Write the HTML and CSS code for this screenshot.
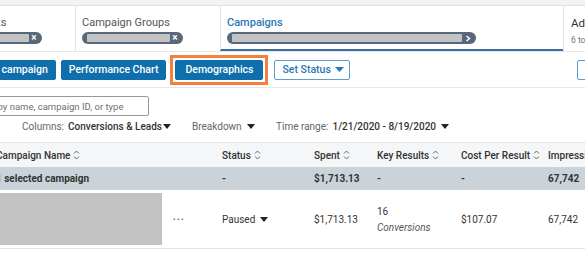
FILE: index.html
```html
<!DOCTYPE html>
<html lang="en">
<head>
    <meta charset="UTF-8">
    <title>Campaigns</title>
    <link rel="stylesheet" href="styles.css">
</head>
<body>
    <div class="top-strip"></div>

    <nav class="tabs">
        <div class="tab tab-accounts">
            <div class="tab-label">Accounts</div>
            <div class="pill"><span class="pill-bar"></span><span class="pill-icon">×</span></div>
        </div>
        <div class="tab tab-groups">
            <div class="tab-label">Campaign Groups</div>
            <div class="pill"><span class="pill-bar"></span><span class="pill-icon">×</span></div>
        </div>
        <div class="tab tab-campaigns active">
            <div class="tab-label">Campaigns</div>
            <div class="pill pill-wide">
                <span class="pill-bar"></span>
                <svg class="pill-chevron" width="6" height="7" viewBox="0 0 6 7"><path d="M1.5 1 L4.5 3.5 L1.5 6" fill="none" stroke="#fff" stroke-width="1.5"/></svg>
            </div>
        </div>
        <div class="tab tab-ads">
            <div class="tab-label">Ads</div>
            <div class="tab-sub">6 total</div>
        </div>
    </nav>

    <div class="actions">
        <button class="btn">Create campaign</button>
        <button class="btn">Performance Chart</button>
        <span class="highlight"><button class="btn btn-demo">Demographics</button></span>
        <button class="btn btn-outline btn-menu">Set Status <svg class="caret" width="9" height="5" viewBox="0 0 9 5"><path d="M0 0 H9 L4.5 5 Z" fill="#2a78b6"/></svg></button>
        <button class="btn btn-outline btn-edge">Export</button>
    </div>

    <div class="search-row">
        <input class="search" type="text" placeholder="Search by name, campaign ID, or type">
    </div>

    <div class="filters">
        <span class="filter f-columns"><span class="filter-label">Columns:</span><b>Conversions &amp; Leads</b><svg class="caret" width="8" height="5" viewBox="0 0 8 5"><path d="M0 0 H8 L4 5 Z" fill="#222"/></svg></span>
        <span class="filter f-breakdown"><span class="filter-label">Breakdown</span><svg class="caret spaced" width="8" height="5" viewBox="0 0 8 5"><path d="M0 0 H8 L4 5 Z" fill="#222"/></svg></span>
        <span class="filter f-time"><span class="filter-label">Time range:</span><b>1/21/2020 - 8/19/2020</b><svg class="caret spaced" width="8" height="5" viewBox="0 0 8 5"><path d="M0 0 H8 L4 5 Z" fill="#222"/></svg></span>
    </div>

    <div class="table">
        <div class="row head">
            <div class="cell">Campaign Name <svg class="sort" width="7" height="10" viewBox="0 0 7 10"><path d="M1 3.5 L3.5 1 L6 3.5 M1 6.5 L3.5 9 L6 6.5" fill="none" stroke="#666" stroke-width="1"/></svg></div>
            <div class="cell">Status <svg class="sort" width="7" height="10" viewBox="0 0 7 10"><path d="M1 3.5 L3.5 1 L6 3.5 M1 6.5 L3.5 9 L6 6.5" fill="none" stroke="#666" stroke-width="1"/></svg></div>
            <div class="cell">Spent <svg class="sort" width="7" height="10" viewBox="0 0 7 10"><path d="M1 3.5 L3.5 1 L6 3.5 M1 6.5 L3.5 9 L6 6.5" fill="none" stroke="#666" stroke-width="1"/></svg></div>
            <div class="cell">Key Results <svg class="sort" width="7" height="10" viewBox="0 0 7 10"><path d="M1 3.5 L3.5 1 L6 3.5 M1 6.5 L3.5 9 L6 6.5" fill="none" stroke="#666" stroke-width="1"/></svg></div>
            <div class="cell">Cost Per Result <svg class="sort" width="7" height="10" viewBox="0 0 7 10"><path d="M1 3.5 L3.5 1 L6 3.5 M1 6.5 L3.5 9 L6 6.5" fill="none" stroke="#666" stroke-width="1"/></svg></div>
            <div class="cell">Impressions</div>
        </div>
        <div class="row summary">
            <div class="cell">1 selected campaign</div>
            <div class="cell">-</div>
            <div class="cell">$1,713.13</div>
            <div class="cell">-</div>
            <div class="cell">-</div>
            <div class="cell">67,742</div>
        </div>
        <div class="row data">
            <div class="cell name-cell"><span class="redacted"></span><span class="more">•••</span></div>
            <div class="cell status-cell">Paused <svg class="caret" width="8" height="5" viewBox="0 0 8 5"><path d="M0 0 H8 L4 5 Z" fill="#222"/></svg></div>
            <div class="cell">$1,713.13</div>
            <div class="cell stack"><span>16</span><i>Conversions</i></div>
            <div class="cell">$107.07</div>
            <div class="cell">67,742</div>
        </div>
    </div>
</body>
</html>
```

FILE: styles.css
```css
* {
    margin: 0;
    padding: 0;
    box-sizing: border-box;
}

body {
    width: 585px;
    height: 255px;
    overflow: hidden;
    background: #fff;
    color: #333;
    font-family: Roboto, "Noto Sans", sans-serif;
    font-size: 11px;
}

.top-strip {
    height: 6px;
    background: #f3f3f3;
    border-bottom: 1px solid #e2e2e2;
}

.tabs {
    display: flex;
    height: 46px;
    margin-left: -46px;
    border-bottom: 1px solid #e6e6e6;
}

.tab {
    padding: 10px 6px 0;
    border-left: 1px solid #e4e4e4;
    flex-shrink: 0;
    white-space: nowrap;
    overflow: hidden;
}

.tab-accounts { width: 121px; border-left: none; }
.tab-groups { width: 145px; }
.tab-campaigns { width: 343px; }
.tab-ads { flex: 1; padding-left: 7px; }

.tab.active {
    border-bottom: 2px solid #3a6ea5;
}

.tab-label {
    font-size: 11px;
    color: #555;
    line-height: 14px;
}

.active .tab-label {
    color: #2a78b6;
    font-weight: 500;
}

.tab-ads .tab-label {
    font-size: 11.5px;
    color: #333;
}

.tab-sub {
    font-size: 8.5px;
    color: #777;
    margin-top: 5px;
}

.pill {
    display: flex;
    align-items: center;
    width: 82px;
    height: 12px;
    margin-top: 2px;
    padding: 0 3px 0 5px;
    background: #56687a;
    border-radius: 6px;
}

.tab-groups .pill { width: 101px; }
.pill-wide { width: 249px; }

.pill-bar {
    flex: 1;
    height: 8px;
    background: #c3c3c3;
    border-radius: 1px;
}

.pill-icon {
    width: 10px;
    text-align: center;
    color: #fff;
    font-size: 10px;
    font-weight: 700;
    line-height: 10px;
}

.pill-chevron {
    margin: 0 2px 0 3px;
}

.actions {
    display: flex;
    align-items: center;
    gap: 5px;
    height: 36px;
    margin-left: -40px;
    border-bottom: 1px solid #e6e6e6;
}

.btn {
    display: flex;
    align-items: center;
    gap: 4px;
    flex-shrink: 0;
    height: 20px;
    padding: 0 7px;
    border: 1px solid #0f6fad;
    border-radius: 2px;
    background: #0f6fad;
    color: #fff;
    font-family: inherit;
    font-size: 10.5px;
    font-weight: 500;
}

.btn-demo {
    padding: 0 9px;
}

.btn-outline {
    background: #fff;
    color: #2a78b6;
    border-color: #5d9bd0;
}

.btn-menu {
    padding-right: 5px;
}

.highlight {
    display: flex;
    flex-shrink: 0;
    margin: 0 1px 0 -1px;
    padding: 2px;
    border: 3px solid #f5803e;
}

.btn-edge {
    margin-left: 222px;
}

.caret {
    flex-shrink: 0;
}

.search-row {
    padding-top: 8px;
    margin-left: -41px;
}

.search {
    width: 190px;
    height: 20px;
    padding: 0 6px;
    border: 1px solid #999;
    border-radius: 2px;
    font-family: inherit;
    font-size: 9.5px;
    color: #333;
}

.search::placeholder {
    color: #6f6f6f;
}

.filters {
    display: flex;
    align-items: center;
    padding-left: 22px;
    height: 21px;
    font-size: 10px;
    color: #333;
}

.filter {
    display: flex;
    align-items: center;
    white-space: nowrap;
}

.f-columns { width: 170px; }
.f-breakdown { width: 84px; }

.filter-label {
    color: #666;
}

.filter b {
    margin-left: 4px;
    font-weight: 500;
}

.filter .caret {
    margin-left: 1px;
}

.filter .caret.spaced {
    margin-left: 5px;
}

.table {
    margin-top: 5px;
    margin-left: -4px;
    border-top: 1px solid #e4e4e4;
    border-bottom: 1px solid #e4e4e4;
}

.row {
    display: grid;
    grid-template-columns: 226px 92px 63px 84px 87px 80px;
    align-items: center;
}

.cell {
    display: flex;
    align-items: center;
    gap: 3px;
    white-space: nowrap;
    overflow: hidden;
}

.status-cell {
    gap: 5px;
}

.head {
    height: 24px;
    background: #f4f6f8;
    font-size: 10px;
    font-weight: 500;
}

.summary {
    height: 23px;
    background: #cbd3da;
    font-size: 10px;
    font-weight: 700;
}

.data {
    height: 58px;
    font-size: 10px;
}

.name-cell {
    height: 100%;
    padding: 3px 0;
}

.redacted {
    width: 162px;
    height: 52px;
    margin-left: 4px;
    background: #c2c2c2;
}

.more {
    margin-left: 8px;
    font-size: 7.5px;
    letter-spacing: 1.5px;
    color: #555;
}

.stack {
    flex-direction: column;
    align-items: flex-start;
    gap: 5px;
}

.stack i {
    color: #555;
}
```
